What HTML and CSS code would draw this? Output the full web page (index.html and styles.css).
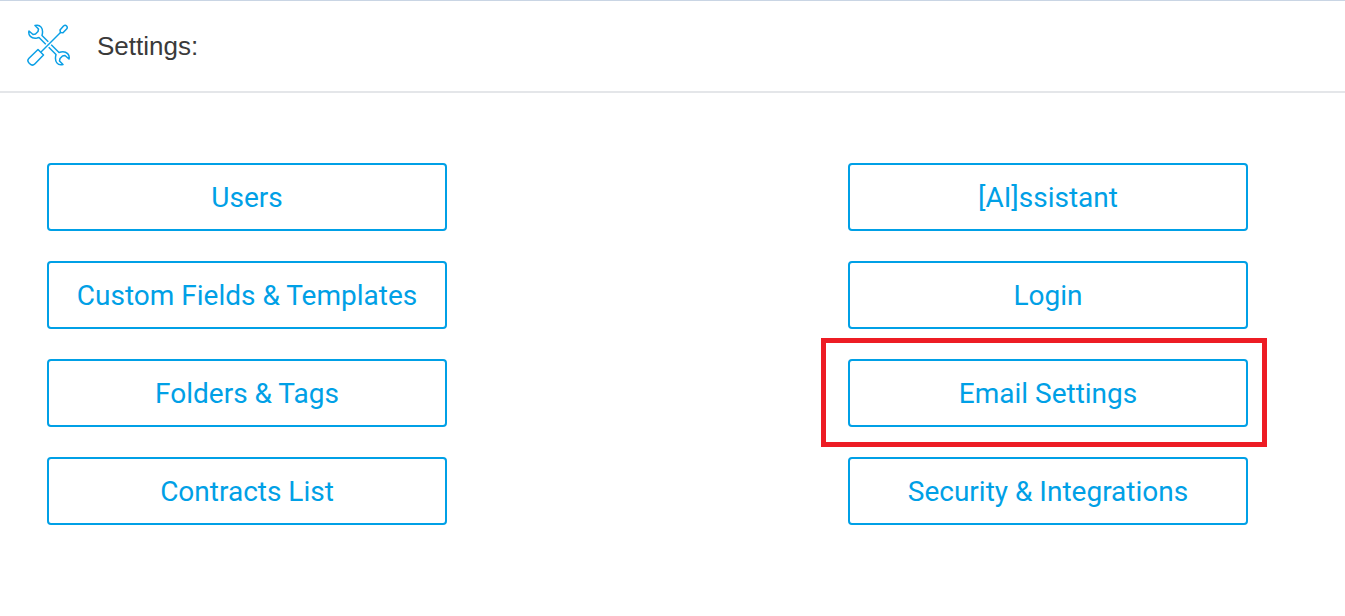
FILE: index.html
```html
<!DOCTYPE html>
<html lang="en">
<head>
  <meta charset="UTF-8">
  <title>Settings</title>
  <link rel="stylesheet" href="styles.css">
</head>
<body>
  <div class="header">
    <svg class="header-icon" width="44" height="44" viewBox="0 0 44 44" fill="none" stroke="#0ba0e6" stroke-width="1.5" stroke-linecap="round" stroke-linejoin="round">
      <!-- wrench -->
      <path d="M8 1.5 L11.5 5 L11 7.5 L8.5 10 L6 10.5 L2 7 C1 11 4 15 10 14 L12 13.5 L29 30.5 C27 38 31 42 36 40.5 L32.5 37 L33 34.5 L35.5 32 L38 31.5 L42 35 C43 31 40 27 34 28 L32 28.5 L15 11.5 C17 4 13 0 8 1.5 Z"/>
      <!-- screwdriver, white line keeps it apart from the wrench -->
      <path d="M15 27 L33 9" stroke="white" stroke-width="4"/>
      <path d="M14.5 27.5 L33.5 8.5"/>
      <path d="M33.5 8.5 L33 6 L36.5 2 C37.5 1.2 38.8 1.2 39.6 2 C40.4 2.8 40.4 4 39.6 5 L36 8.8 Z"/>
      <path d="M11 25.5 L16.5 31 L8 39.8 C6.5 41.3 4.3 41.3 2.8 39.8 L1.8 38.8 C0.6 37.4 0.6 35.6 2 34.2 Z" fill="white"/>
    </svg>
    <span class="header-title">Settings:</span>
  </div>

  <div class="button-grid">
    <a class="setting-btn">Users</a>
    <a class="setting-btn">[AI]ssistant</a>
    <a class="setting-btn">Custom Fields &amp; Templates</a>
    <a class="setting-btn">Login</a>
    <a class="setting-btn">Folders &amp; Tags</a>
    <a class="setting-btn">Email Settings<span class="highlight-box"></span></a>
    <a class="setting-btn">Contracts List</a>
    <a class="setting-btn">Security &amp; Integrations</a>
  </div>
</body>
</html>
```

FILE: styles.css
```css
* {
  margin: 0;
  padding: 0;
  box-sizing: border-box;
}

html, body {
  height: 616px;
  overflow: hidden;
}

body {
  background: white;
  font-family: Roboto, sans-serif;
  border-top: 1px solid #c9d5e4;
}

.header {
  display: flex;
  align-items: center;
  height: 92px;
  padding-left: 27px;
  padding-bottom: 1px;
  border-bottom: 2px solid #e4e6e9;
}

.header-icon {
  flex-shrink: 0;
}

.header-title {
  margin-left: 26px;
  margin-top: 2px;
  font-family: "Liberation Sans", Arial, sans-serif;
  font-size: 26px;
  color: #3a3a3a;
}

.button-grid {
  display: grid;
  grid-template-columns: 400px 400px;
  grid-auto-rows: 68px;
  column-gap: 401px;
  row-gap: 30px;
  padding: 70px 0 0 47px;
}

.setting-btn {
  position: relative;
  display: flex;
  align-items: center;
  justify-content: center;
  border: 2px solid #00a0e6;
  border-radius: 4px;
  color: #00a0e6;
  font-size: 28px;
}

.highlight-box {
  position: absolute;
  top: -23px;
  left: -29px;
  right: -21px;
  bottom: -22px;
  border: 5px solid #ed1c24;
}
```
